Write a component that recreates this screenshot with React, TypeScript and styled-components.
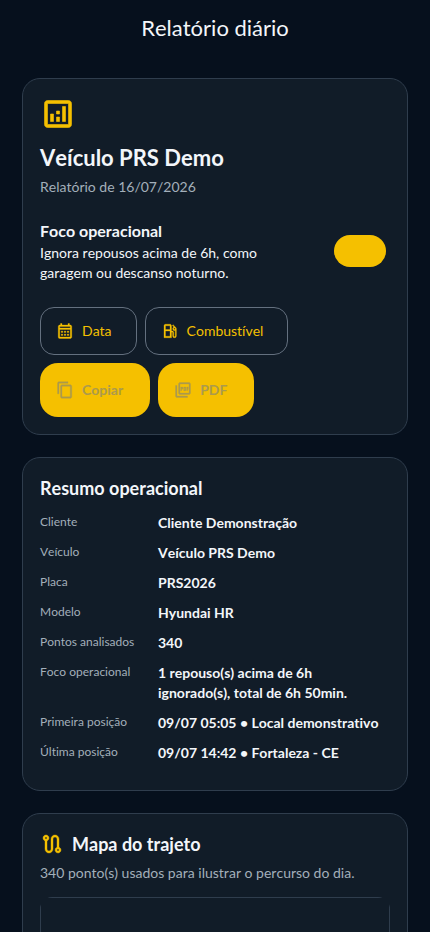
import React from "react";
import styled, { createGlobalStyle, css } from "styled-components";
import {
  MdContentCopy,
  MdOutlineAnalytics,
  MdOutlineCalendarMonth,
  MdOutlineLocalGasStation,
  MdOutlinePictureAsPdf,
  MdOutlineRoute,
} from "react-icons/md";

const color = {
  page: "#06101d",
  card: "#111c28",
  line: "#2f3d4d",
  outline: "#64707f",
  accent: "#f5c000",
  text: "#f3f6fa",
  muted: "#a3afba",
  disabled: "#ab9a4d",
};

const GlobalStyle = createGlobalStyle`
  * { box-sizing: border-box; }
  html, body, #root { height: 100%; }
  body {
    margin: 0;
    background: ${color.page};
    color: ${color.text};
    font-family: Lato, "Open Sans", sans-serif;
    font-size: 14px;
    font-kerning: none;
    font-variant-ligatures: none;
    line-height: 20px;
  }
  h1, h2, p, dl, dd { margin: 0; }
`;

const Screen = styled.div`
  display: flex;
  flex-direction: column;
  height: 100%;
`;

const TopBar = styled.header`
  display: flex;
  flex: none;
  align-items: center;
  justify-content: center;
  height: 56px;
`;

const PageTitle = styled.h1`
  font-size: 22px;
  font-weight: 400;
  line-height: 28px;
`;

const Content = styled.main`
  display: flex;
  flex: 1;
  flex-direction: column;
  gap: 22px;
  min-height: 0;
  padding: 22px;
  overflow-y: auto;
  scrollbar-width: none;
`;

const Card = styled.section`
  flex: none;
  padding: 17px;
  background: ${color.card};
  border: 1px solid ${color.line};
  border-radius: 18px;
`;

const heavyIcon = css`
  flex: none;
  stroke: currentColor;
  stroke-width: 0.4;

  path[fill="none"] {
    stroke: none;
  }
`;

const HeroIcon = styled(MdOutlineAnalytics)`
  ${heavyIcon}
  display: block;
  margin-bottom: 12px;
  color: ${color.accent};
`;

const VehicleName = styled.h2`
  font-size: 22px;
  font-weight: 700;
  line-height: 28px;
`;

const Muted = styled.p<{ $top: number }>`
  margin-top: ${(p) => p.$top}px;
  color: ${color.muted};
`;

const FocusRow = styled.div`
  display: flex;
  align-items: center;
  justify-content: space-between;
  gap: 16px;
  margin: 22px 4px 24px 0;
`;

const FocusLabel = styled.label`
  max-width: 246px;
`;

const FocusTitle = styled.strong`
  display: block;
  font-size: 16px;
  font-weight: 700;
  line-height: 24px;
`;

const Switch = styled.input`
  flex: none;
  appearance: none;
  width: 52px;
  height: 32px;
  margin: 0;
  background: ${color.accent};
  border-radius: 16px;
  cursor: pointer;

  &:not(:checked) {
    background: ${color.outline};
  }
`;

const Actions = styled.div`
  display: flex;
  flex-wrap: wrap;
  gap: 8px;
`;

const ActionButton = styled.button<{ $filled?: boolean }>`
  display: flex;
  align-items: center;
  gap: 8px;
  height: ${(p) => (p.$filled ? 54 : 48)}px;
  padding: 0 ${(p) => (p.$filled ? 27 : 24)}px 0 ${(p) => (p.$filled ? 16 : 15)}px;
  color: ${(p) => (p.$filled ? color.disabled : color.accent)};
  background: ${(p) => (p.$filled ? color.accent : "transparent")};
  border: ${(p) => (p.$filled ? "none" : `1px solid ${color.outline}`)};
  border-radius: ${(p) => (p.$filled ? 18 : 14)}px;
  font: inherit;
  font-kerning: none;
  font-variant-ligatures: none;
  font-weight: ${(p) => (p.$filled ? 700 : 400)};

  svg {
    ${heavyIcon}
  }
`;

const SectionTitle = styled.h2`
  font-size: 18px;
  font-weight: 700;
  line-height: 26px;
`;

const Facts = styled.dl`
  margin-top: 12px;
`;

const Fact = styled.div`
  display: grid;
  grid-template-columns: 110px 1fr;
  gap: 8px;
  padding: 0 4px 10px 0;
`;

const FactName = styled.dt`
  color: ${color.muted};
  font-size: 12px;
  line-height: 18px;
`;

const FactValue = styled.dd`
  font-weight: 700;
`;

const SectionHeader = styled.div`
  display: flex;
  align-items: center;
  gap: 8px;
`;

const RouteIcon = styled(MdOutlineRoute)`
  ${heavyIcon}
  color: ${color.accent};
`;

const MapClip = styled.div`
  height: 280px;
  margin-top: 14px;
  overflow: hidden;
  border-radius: 12px;
`;

const MapCanvas = styled.div`
  height: 100%;
  border: 1px solid ${color.line};
`;

const facts = [
  ["Cliente", "Cliente Demonstração"],
  ["Veículo", "Veículo PRS Demo"],
  ["Placa", "PRS2026"],
  ["Modelo", "Hyundai HR"],
  ["Pontos analisados", "340"],
  ["Foco operacional", "1 repouso(s) acima de 6h ignorado(s), total de 6h 50min."],
  ["Primeira posição", "09/07 05:05 • Local demonstrativo"],
  ["Última posição", "09/07 14:42 • Fortaleza - CE"],
];

export default function App() {
  return (
    <Screen>
      <GlobalStyle />
      <TopBar>
        <PageTitle>Relatório diário</PageTitle>
      </TopBar>
      <Content>
        <Card>
          <HeroIcon size={36} />
          <VehicleName>Veículo PRS Demo</VehicleName>
          <Muted $top={5}>Relatório de 16/07/2026</Muted>
          <FocusRow>
            <FocusLabel htmlFor="focus">
              <FocusTitle>Foco operacional</FocusTitle>
              Ignora repousos acima de 6h, como garagem ou descanso noturno.
            </FocusLabel>
            <Switch id="focus" type="checkbox" role="switch" defaultChecked />
          </FocusRow>
          <Actions>
            <ActionButton type="button">
              <MdOutlineCalendarMonth size={18} />
              Data
            </ActionButton>
            <ActionButton type="button">
              <MdOutlineLocalGasStation size={18} />
              Combustível
            </ActionButton>
            <ActionButton type="button" $filled disabled>
              <MdContentCopy size={18} />
              Copiar
            </ActionButton>
            <ActionButton type="button" $filled disabled>
              <MdOutlinePictureAsPdf size={18} />
              PDF
            </ActionButton>
          </Actions>
        </Card>

        <Card>
          <SectionTitle>Resumo operacional</SectionTitle>
          <Facts>
            {facts.map(([name, value]) => (
              <Fact key={name}>
                <FactName>{name}</FactName>
                <FactValue>{value}</FactValue>
              </Fact>
            ))}
          </Facts>
        </Card>

        <Card>
          <SectionHeader>
            <RouteIcon size={24} />
            <SectionTitle>Mapa do trajeto</SectionTitle>
          </SectionHeader>
          <Muted $top={6}>340 ponto(s) usados para ilustrar o percurso do dia.</Muted>
          <MapClip>
            <MapCanvas />
          </MapClip>
        </Card>
      </Content>
    </Screen>
  );
}
